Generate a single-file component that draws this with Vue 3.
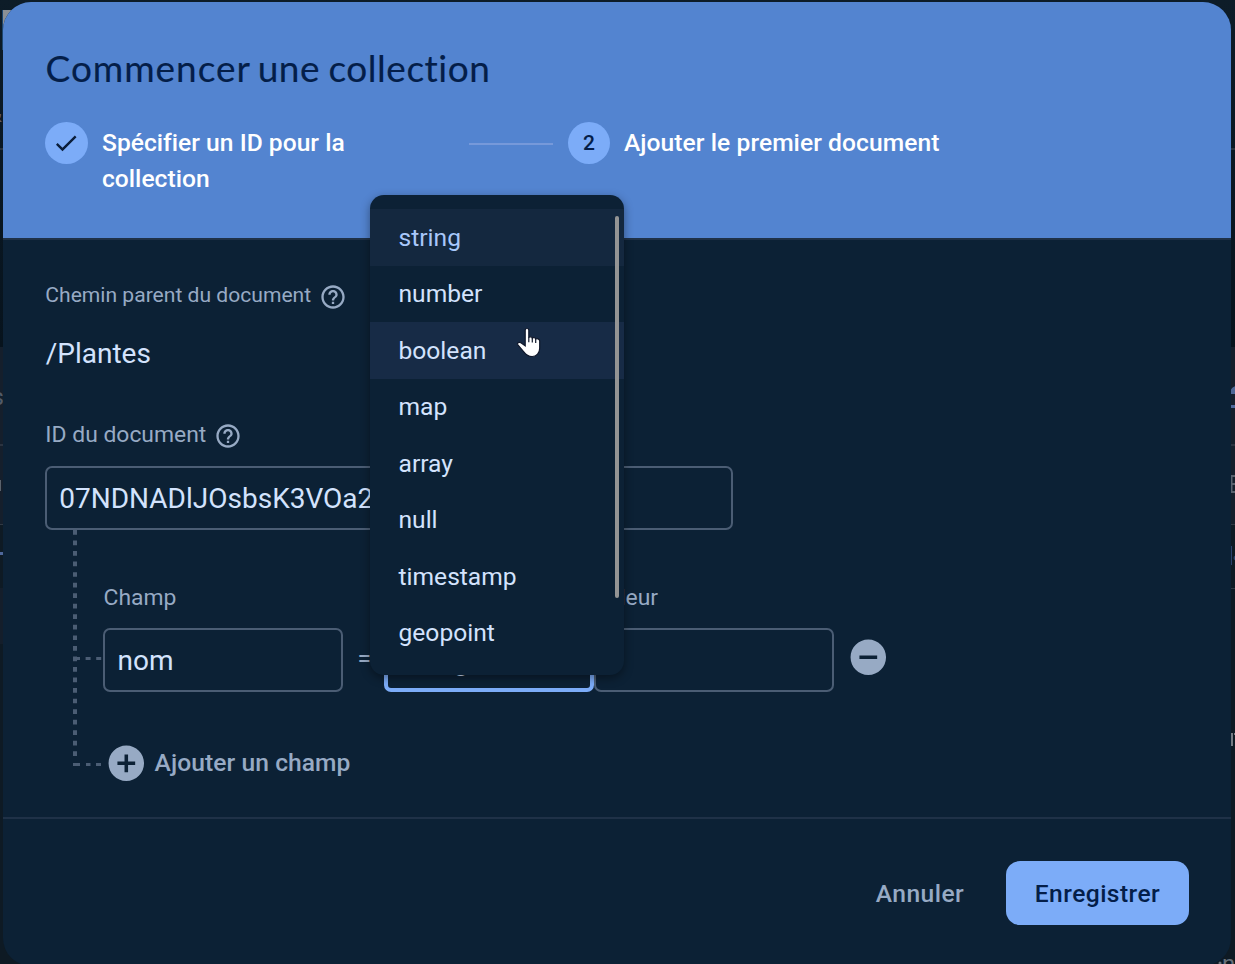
<script setup>
const types = ['string', 'number', 'boolean', 'map', 'array', 'null', 'timestamp', 'geopoint']
const helpPath =
  'M11 18h2v-2h-2v2zm1-16C6.48 2 2 6.48 2 12s4.48 10 10 10 10-4.48 10-10S17.52 2 12 2zm0 18c-4.41 0-8-3.59-8-8s3.59-8 8-8 8 3.59 8 8-3.59 8-8 8zm0-14c-2.21 0-4 1.79-4 4h2c0-1.1.9-2 2-2s2 .9 2 2c0 2-3 1.75-3 5h2c0-2.25 3-2.5 3-5 0-2.21-1.79-4-4-4z'
</script>

<template>
  <div class="stage">
    <svg class="backdrop" width="1235" height="964" viewBox="0 0 1235 964">
      <defs>
        <linearGradient id="shade" x1="0" y1="0" x2="0" y2="1">
          <stop offset="0" stop-color="#0d1c28" />
          <stop offset="1" stop-color="#07131d" />
        </linearGradient>
      </defs>
      <rect width="1235" height="964" fill="#0e1a24" />
      <rect width="1235" height="347" fill="url(#shade)" />
      <rect y="347" width="1235" height="177" fill="#151f2c" />
      <rect y="588" width="3" height="56" fill="#141e2b" />
      <rect x="2" y="10" width="22" height="40" fill="#8b9096" />
      <rect x="2" y="10" width="1" height="40" fill="#1c4670" />
      <rect y="148" width="1235" height="2" fill="#29323d" />
      <rect y="444" width="1235" height="2" fill="#2b3441" />
      <rect y="524" width="1235" height="1" fill="#303944" />
      <rect y="552" width="3" height="3" fill="#4e679a" />
      <rect x="1231" y="588" width="4" height="1" fill="#303944" />
      <rect y="480" width="1" height="11" fill="#5a626c" />
      <circle cx="1237" cy="393" r="7" fill="#4e6796" />
      <rect x="1230" y="394" width="5" height="11" fill="#151f2c" />
      <rect x="1230" y="405" width="5" height="3" fill="#4e679a" />
      <path d="M1235 476h-3.5v16h3.5M1231 484h4" fill="none" stroke="#59626e" stroke-width="2" />
      <rect x="1231" y="546" width="1" height="19" fill="#2c426d" />
      <circle cx="1236" cy="558" r="2.5" fill="#2c426d" />
      <rect x="1231" y="733" width="2" height="13" fill="#747b83" />
      <rect x="1234" y="733" width="1" height="2" fill="#747b83" />
      <text x="-13" y="122" class="scrap" fill="#625f64">&amp;</text>
      <text x="-8.5" y="405" class="scrap" fill="#525b68">s</text>
      <text x="1222" y="972" class="scrap" fill="#68717b">n</text>
      <circle cx="1220" cy="963" r="1.5" fill="#68717b" />
    </svg>

    <main class="dialog">
      <header class="header">
        <h1 class="title">Commencer <span class="tight">une collection</span></h1>
        <div class="steps">
          <span class="badge done">
            <svg width="28" height="28" viewBox="0 0 24 24">
              <path d="M9 16.17 4.83 12l-1.42 1.41L9 19 21 7l-1.41-1.41z" fill="#0b1f3c" />
            </svg>
          </span>
          <span class="step-label first">Spécifier un ID pour la collection</span>
          <span class="step-line"></span>
          <span class="badge">2</span>
          <span class="step-label">Ajouter le premier document</span>
        </div>
      </header>

      <section class="body">
        <div class="label parent">
          <span>Chemin parent du document</span>
          <svg width="28" height="28" viewBox="0 0 24 24"><path :d="helpPath" /></svg>
        </div>
        <div class="path">/Plantes</div>
        <div class="label docid">
          <span>ID du document</span>
          <svg width="28" height="28" viewBox="0 0 24 24"><path :d="helpPath" /></svg>
        </div>
        <div class="field id-field">07NDNADlJOsbsK3VOa2</div>

        <div class="tree">
          <svg class="branches" width="58" height="240" viewBox="0 0 58 240">
            <g fill="none" stroke="#4b5d74">
              <path d="M30 0V228" stroke-width="4" stroke-dasharray="4.7 5.84" />
              <path d="M30 128.5H57" stroke-width="3" stroke-dasharray="5 5.6" />
              <path d="M28 234.5H57" stroke-width="3" stroke-dasharray="7 6 4.5 5.5 5 9" />
            </g>
          </svg>
          <div class="entries">
            <div class="row">
              <div class="column name">
                <span class="caption">Champ</span>
                <div class="field">nom</div>
              </div>
              <span class="equals">=</span>
              <div class="column type">
                <span class="caption">Type</span>
                <div class="field active">string</div>
              </div>
              <div class="column value">
                <span class="caption">Valeur</span>
                <div class="field"></div>
              </div>
              <svg class="remove" width="42.6" height="42.6" viewBox="0 0 24 24">
                <path d="M12 2C6.48 2 2 6.48 2 12s4.48 10 10 10 10-4.48 10-10S17.52 2 12 2zm5 11H7v-2h10v2z" fill="#97aac4" />
              </svg>
            </div>
            <div class="add">
              <svg width="42.6" height="42.6" viewBox="0 0 24 24">
                <path d="M12 2C6.48 2 2 6.48 2 12s4.48 10 10 10 10-4.48 10-10S17.52 2 12 2zm5 11h-4v4h-2v-4H7v-2h4V7h2v4h4v2z" fill="#97aac4" />
              </svg>
              <span>Ajouter un champ</span>
            </div>
          </div>
        </div>
      </section>

      <footer class="footer">
        <button class="button cancel">Annuler</button>
        <button class="button save">Enregistrer</button>
      </footer>
    </main>

    <div class="menu">
      <div
        v-for="type in types"
        :key="type"
        class="option"
        :class="{ selected: type === 'string', hovered: type === 'boolean' }"
      >
        {{ type }}
      </div>
      <span class="scrollbar"></span>
    </div>

    <svg class="cursor" width="30" height="36" viewBox="0 0 30 36">
      <path
        d="M10.2 5.2c0-2.3 3.6-2.3 3.6 0v7.3c.5-1.1 3.3-.9 3.5.5.8-.8 3.2-.4 3.4 1 1.3-.9 4 0 4 2v7.2c0 4.5-3.1 8.3-7.6 8.3-3.8 0-6-1.6-8.3-4.7l-5.9-6.9c-1.2-1.7.7-3.2 3-2.1l4.3 3z"
        fill="#fff"
        stroke="#10182b"
        stroke-width="1.2"
      />
      <path d="M13.8 12v5.2M17.3 13v4.6M20.7 14v4" stroke="#10182b" stroke-width="1.2" fill="none" />
    </svg>
  </div>
</template>

<style>
html,
body {
  margin: 0;
  background: #0e1a24;
  overflow: hidden;
}
</style>

<style scoped>
.stage {
  position: relative;
  box-sizing: border-box;
  width: 1235px;
  height: 964px;
  padding: 2px 4px 0 3px;
  overflow: hidden;
  font-family: Roboto, 'Liberation Sans', sans-serif;
  color: #d3e3fd;
}
.stage *,
.stage *::before {
  box-sizing: border-box;
}
.backdrop {
  position: absolute;
  left: 0;
  top: 0;
}
.scrap {
  font-size: 24px;
}
.dialog {
  position: relative;
  width: 1228px;
  height: 964px;
  border-radius: 28px;
  overflow: hidden;
  background: #0c2135;
}
.header {
  height: 238px;
  padding: 43px 42px 0;
  background: #5384d0;
  border-bottom: 2px solid #1f3147;
}
.title {
  margin: 0;
  height: 46px;
  padding-left: 0.6px;
  line-height: 46px;
  font-family: Lato, sans-serif;
  font-size: 37px;
  font-weight: 400;
  letter-spacing: 0.95px;
  word-spacing: -2.8px;
  color: #041e49;
  -webkit-text-stroke: 0.15px #041e49;
  white-space: nowrap;
}
.tight {
  letter-spacing: 0.52px;
  word-spacing: -1.6px;
}
.steps {
  display: flex;
  align-items: flex-start;
  margin-top: 31px;
}
.badge {
  display: flex;
  align-items: center;
  justify-content: center;
  flex: none;
  width: 42px;
  height: 42px;
  border-radius: 50%;
  background: #7cacf8;
  color: #041e49;
  font-size: 21px;
  font-weight: 500;
}
.done {
  width: 43px;
  padding-right: 1px;
}
.step-label {
  margin-left: 14px;
  font-size: 24.6px;
  line-height: 36px;
  font-weight: 500;
  letter-spacing: 0.06px;
  color: #fff;
  padding-top: 3px;
  white-space: nowrap;
}
.step-label.first {
  width: 353px;
  padding-right: 90px;
  letter-spacing: 0.02px;
  white-space: normal;
}
.step-line {
  width: 84px;
  height: 2px;
  margin: 21px 15px 0 14px;
  background: #7699da;
}
.body {
  height: 577px;
  padding: 41px 42px 0;
}
.label {
  display: flex;
  align-items: center;
  height: 32px;
  font-size: 21.1px;
  color: #97aac4;
}
.label span {
  margin: -5px 0 0 0.3px;
}
.label svg {
  margin: 0 0 0 7.5px;
  fill: #97aac4;
}
.path {
  height: 56px;
  margin-top: 13px;
  padding-left: 0.7px;
  line-height: 56px;
  font-size: 28px;
}
.docid {
  margin-top: 38px;
  font-size: 22.9px;
}
.docid span {
  margin-top: -4px;
}
.field {
  height: 64px;
  padding: 0 12.6px;
  border: 2px solid #4b5d74;
  border-radius: 7px;
  line-height: 62px;
  font-size: 28px;
  white-space: nowrap;
}
.id-field {
  width: 688px;
  margin-top: 14px;
  padding-left: 12.3px;
}
.tree {
  display: flex;
}
.branches {
  flex: none;
}
.entries {
  padding-top: 52px;
}
.row {
  display: flex;
  align-items: flex-end;
  height: 110px;
}
.column {
  display: flex;
  flex-direction: column;
}
.caption {
  height: 46px;
  padding-left: 0.5px;
  line-height: 31px;
  font-size: 22.9px;
  color: #97aac4;
}
.name {
  width: 240px;
}
.equals {
  width: 41px;
  padding-left: 14.5px;
  line-height: 66px;
  font-size: 24.6px;
  color: #97aac4;
}
.type {
  width: 210px;
}
.active {
  padding: 0 10px;
  border: 4px solid #7cacf8;
  line-height: 58px;
}
.value {
  width: 240px;
}
.value .caption {
  margin-left: -1px;
}
.remove {
  margin: 0 0 13px 13.4px;
}
.add {
  display: flex;
  align-items: center;
  margin: 50px 0 0 2px;
  font-size: 24.6px;
  font-weight: 500;
  letter-spacing: 0.07px;
  color: #97aac4;
}
.add span {
  margin: -2px 0 0 7px;
}
.footer {
  display: flex;
  justify-content: flex-end;
  height: 149px;
  padding: 42px 42px 0;
  border-top: 2px solid #1f3147;
}
.button {
  height: 64px;
  border: 0;
  padding: 0;
  font-family: inherit;
  font-size: 24.6px;
  font-weight: 500;
  letter-spacing: 0.44px;
}
.cancel {
  width: 130px;
  margin-right: 21px;
  background: none;
  color: #97aac4;
}
.save {
  width: 183px;
  border-radius: 14px;
  background: #7cacf8;
  color: #041e49;
}
.menu {
  position: absolute;
  left: 370px;
  top: 195px;
  width: 254px;
  height: 480px;
  padding-top: 14px;
  border-radius: 14px;
  overflow: hidden;
  background: #0c2135;
  box-shadow: 0 3px 10px rgba(0, 0, 0, 0.4);
}
.option {
  height: 56.5px;
  padding-left: 28.5px;
  line-height: 56.5px;
  font-size: 24.6px;
}
.option:nth-child(odd) {
  line-height: 57px;
}
.selected {
  background: #14283f;
  color: #a8c7fa;
}
.hovered {
  background: #172b46;
}
.scrollbar {
  position: absolute;
  left: 245px;
  top: 21px;
  width: 4px;
  height: 382px;
  border-radius: 2px;
  background: #949494;
}
.cursor {
  position: absolute;
  left: 514.5px;
  top: 325px;
}
</style>
